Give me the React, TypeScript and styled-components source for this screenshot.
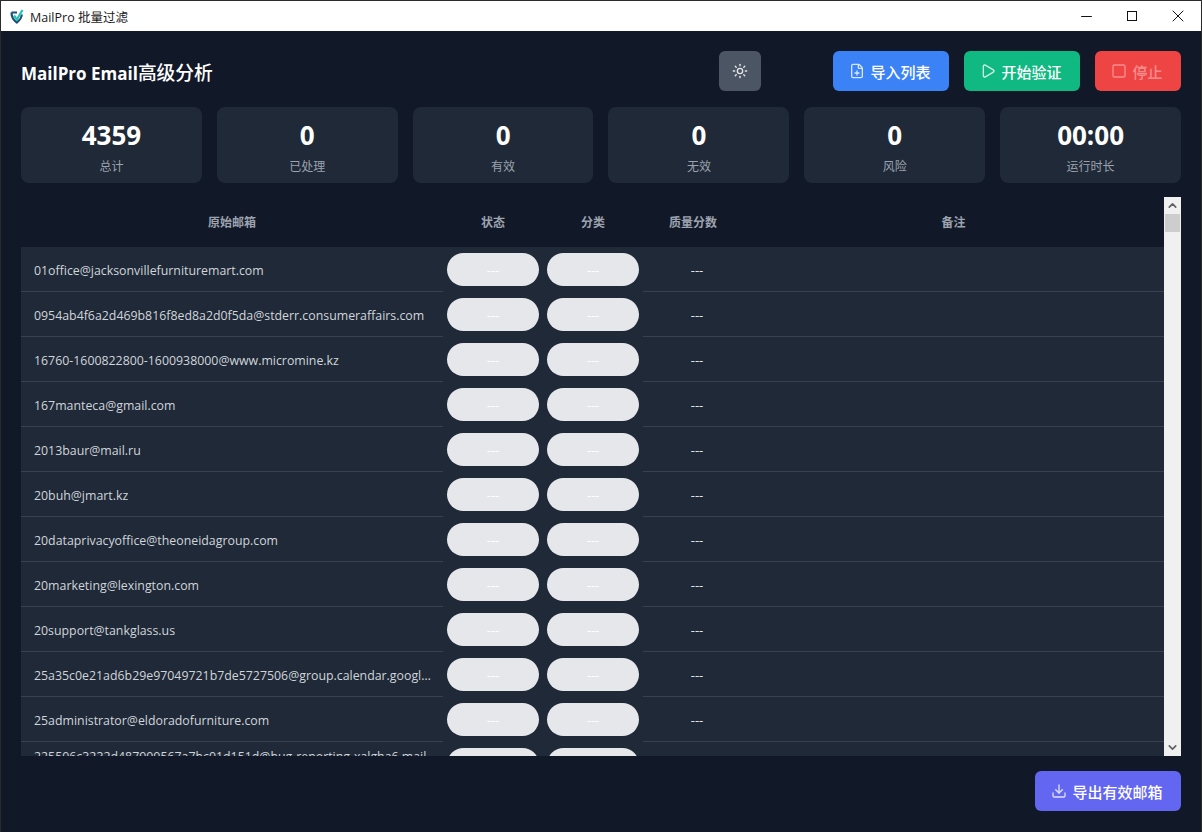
import React from "react"
import styled, { createGlobalStyle } from "styled-components"
import { ChevronDown, ChevronUp, Download, FilePlus, Minus, Play, Square, Sun, X } from "lucide-react"

const FONT = `"Open Sans", "Noto Sans", "Noto Sans CJK SC", sans-serif`

const stats = [
  { value: "4359", label: "总计" },
  { value: "0", label: "已处理" },
  { value: "0", label: "有效" },
  { value: "0", label: "无效" },
  { value: "0", label: "风险" },
  { value: "00:00", label: "运行时长" },
]

const emails = [
  "01office@jacksonvillefurnituremart.com",
  "0954ab4f6a2d469b816f8ed8a2d0f5da@stderr.consumeraffairs.com",
  "16760-1600822800-1600938000@www.micromine.kz",
  "167manteca@gmail.com",
  "2013baur@mail.ru",
  "20buh@jmart.kz",
  "20dataprivacyoffice@theoneidagroup.com",
  "20marketing@lexington.com",
  "20support@tankglass.us",
  "25a35c0e21ad6b29e97049721b7de5727506@group.calendar.google.com",
  "25administrator@eldoradofurniture.com",
  "225506c3232d487900567a7bc01d151d@bug-reporting-xalgha6.mail.example.com",
]

function AppIcon() {
  return (
    <svg width="14" height="15" viewBox="0 0 14 15">
      <path d="M1.5 3.5h5.5M1.5 3.5C1.5 8 4 11.5 6.8 13.5 9.5 11.5 11.5 8.5 11.8 5.5" fill="none" stroke="#1f4e79" strokeWidth="2.2" />
      <path d="M4 6.5l2.8 4L12.5 1" fill="none" stroke="#22c3b5" strokeWidth="2.2" />
    </svg>
  )
}

function App() {
  return (
    <Window>
      <GlobalStyle />
      <TitleBar>
        <AppIcon />
        <WindowTitle>MailPro 批量过滤</WindowTitle>
        <WindowControls>
          <WindowControl><Minus size={17} strokeWidth={1.4} /></WindowControl>
          <WindowControl><MaxBox /></WindowControl>
          <WindowControl><X size={20} strokeWidth={1.2} /></WindowControl>
        </WindowControls>
      </TitleBar>

      <Main>
        <Header>
          <Heading>MailPro Email<HeadingCjk>高级分析</HeadingCjk></Heading>
          <ThemeButton><Sun size={16} strokeWidth={2} /></ThemeButton>
          <Actions>
            <ActionButton $color="#3b82f6" $width={116}><FilePlus size={16} strokeWidth={2} opacity={0.8} />导入列表</ActionButton>
            <ActionButton $color="#10b981" $width={116}><Play size={16} strokeWidth={2} opacity={0.8} />开始验证</ActionButton>
            <ActionButton $color="#ef4444" $width={86} $dim><Square size={16} strokeWidth={2} />停止</ActionButton>
          </Actions>
        </Header>

        <Stats>
          {stats.map((stat) => (
            <StatCard key={stat.label}>
              <StatValue>{stat.value}</StatValue>
              <StatLabel>{stat.label}</StatLabel>
            </StatCard>
          ))}
        </Stats>

        <TableWrap>
          <Table>
            <HeadRow>
              <HeadCell>原始邮箱</HeadCell>
              <HeadCell>状态</HeadCell>
              <HeadCell>分类</HeadCell>
              <HeadCell>质量分数</HeadCell>
              <HeadCell>备注</HeadCell>
            </HeadRow>
            {emails.map((email) => (
              <Row key={email}>
                <EmailCell><EmailText>{email}</EmailText></EmailCell>
                <PillCell><Pill>---</Pill></PillCell>
                <PillCell><Pill>---</Pill></PillCell>
                <ScoreCell>---</ScoreCell>
                <NoteCell />
              </Row>
            ))}
          </Table>
          <Scrollbar>
            <ScrollArrow><ChevronUp size={13} strokeWidth={3} /></ScrollArrow>
            <ScrollThumb />
            <ScrollTrack />
            <ScrollArrow><ChevronDown size={13} strokeWidth={3} /></ScrollArrow>
          </Scrollbar>
        </TableWrap>

        <Footer>
          <ActionButton $color="#6366f1" $width={146}><Download size={16} strokeWidth={2} opacity={0.8} />导出有效邮箱</ActionButton>
        </Footer>
      </Main>
    </Window>
  )
}

export default App

const GlobalStyle = createGlobalStyle`
  html, body {
    margin: 0;
    padding: 0;
    background: #111827;
  }

  * {
    box-sizing: border-box;
  }
`

const Window = styled.div`
  width: 1202px;
  height: 832px;
  border: 1px solid #2b2b2b;
  border-bottom: 0;
  display: flex;
  flex-direction: column;
  overflow: hidden;
  background: #111827;
  font-family: ${FONT};
`

const TitleBar = styled.div`
  height: 30px;
  flex: none;
  display: flex;
  align-items: center;
  padding-left: 9px;
  background: #fff;
`

const WindowTitle = styled.span`
  margin-left: 6px;
  font-size: 12.5px;
  color: #1a1a1a;
`

const WindowControls = styled.div`
  margin-left: auto;
  display: flex;
`

const WindowControl = styled.div`
  width: 46px;
  height: 30px;
  display: flex;
  align-items: center;
  justify-content: center;
  color: #111;
`

const MaxBox = styled.div`
  width: 10px;
  height: 10px;
  border: 1px solid #111;
`

const Main = styled.div`
  flex: 1;
  min-height: 0;
  display: flex;
  flex-direction: column;
  padding: 20px 20px 0;
`

const Header = styled.div`
  height: 40px;
  flex: none;
  display: flex;
  align-items: center;
`

const Heading = styled.h1`
  margin: 0;
  font-size: 17px;
  font-weight: 700;
  color: #fff;
`

const HeadingCjk = styled.span`
  font-size: 18.75px;
  font-weight: 500;
`

const ThemeButton = styled.button`
  width: 42px;
  height: 40px;
  margin-left: auto;
  margin-right: 72px;
  padding: 0;
  border: 0;
  border-radius: 6px;
  display: flex;
  align-items: center;
  justify-content: center;
  background: #4b5563;
  color: #e5e7eb;
`

const Actions = styled.div`
  display: flex;
  gap: 15px;
`

const ActionButton = styled.button<{ $color: string; $width: number; $dim?: boolean }>`
  width: ${(props) => props.$width}px;
  height: 40px;
  padding: 0 2px 0 0;
  border: 0;
  border-radius: 6px;
  display: flex;
  align-items: center;
  justify-content: center;
  gap: 5px;
  background: ${(props) => props.$color};
  color: ${(props) => (props.$dim ? "rgba(255, 255, 255, 0.4)" : "#fff")};
  font-family: ${FONT};
  font-size: 15px;
  font-weight: 500;
`

const Stats = styled.div`
  flex: none;
  margin-top: 16px;
  display: grid;
  grid-template-columns: repeat(6, 1fr);
  gap: 15px;
`

const StatCard = styled.div`
  height: 76px;
  border-radius: 8px;
  display: flex;
  flex-direction: column;
  align-items: center;
  padding-top: 12px;
  background: #1f2937;
`

const StatValue = styled.div`
  font-size: 26px;
  line-height: 32px;
  font-weight: 700;
  color: #fff;
`

const StatLabel = styled.div`
  margin-top: 7px;
  font-size: 12px;
  line-height: 17px;
  color: #9ca3af;
`

const TableWrap = styled.div`
  height: 559px;
  flex: none;
  margin-top: 14px;
  display: flex;
`

const Table = styled.div`
  flex: 1;
  min-width: 0;
  overflow: hidden;
`

const columns = "422px 100px 100px 100px 1fr"

const HeadRow = styled.div`
  height: 50px;
  display: grid;
  grid-template-columns: ${columns};
`

const HeadCell = styled.div`
  display: flex;
  align-items: center;
  justify-content: center;
  font-size: 12px;
  font-weight: 700;
  color: #9ca3af;
`

const Row = styled.div`
  height: 45px;
  display: grid;
  grid-template-columns: ${columns};
  background: #1f2937;
`

const EmailCell = styled.div`
  min-width: 0;
  display: flex;
  align-items: center;
  padding: 2px 6px 0 13px;
  border-bottom: 1px solid #374151;
  font-size: 12.35px;
  color: #d1d5db;

  /* the last, half-scrolled row has its text sitting higher in the cell */
  ${Row}:last-child & {
    padding: 0 6px 16px 13px;
  }
`

const EmailText = styled.span`
  overflow: hidden;
  white-space: nowrap;
  text-overflow: ellipsis;
`

const PillCell = styled.div`
  display: flex;
  justify-content: center;
  padding-top: 6px;
`

const Pill = styled.div`
  width: 92px;
  height: 33px;
  border-radius: 17px;
  display: flex;
  align-items: center;
  justify-content: center;
  background: #e5e7eb;
  color: #fff;
  font-size: 13px;
`

const ScoreCell = styled.div`
  display: flex;
  align-items: center;
  justify-content: center;
  padding: 1px 0 0 8px;
  border-bottom: 1px solid #374151;
  font-size: 13px;
  color: #e5e7eb;
`

const NoteCell = styled.div`
  border-bottom: 1px solid #374151;
`

const Scrollbar = styled.div`
  width: 17px;
  flex: none;
  display: flex;
  flex-direction: column;
  background: #f0f0f0;
`

const ScrollArrow = styled.div`
  height: 17px;
  flex: none;
  display: flex;
  align-items: center;
  justify-content: center;
  color: #606060;
`

const ScrollThumb = styled.div`
  height: 18px;
  flex: none;
  margin: 0 1px;
  background: #cdcdcd;
`

const ScrollTrack = styled.div`
  flex: 1;
`

const Footer = styled.div`
  flex: none;
  margin-top: 15px;
  display: flex;
  justify-content: flex-end;
`
